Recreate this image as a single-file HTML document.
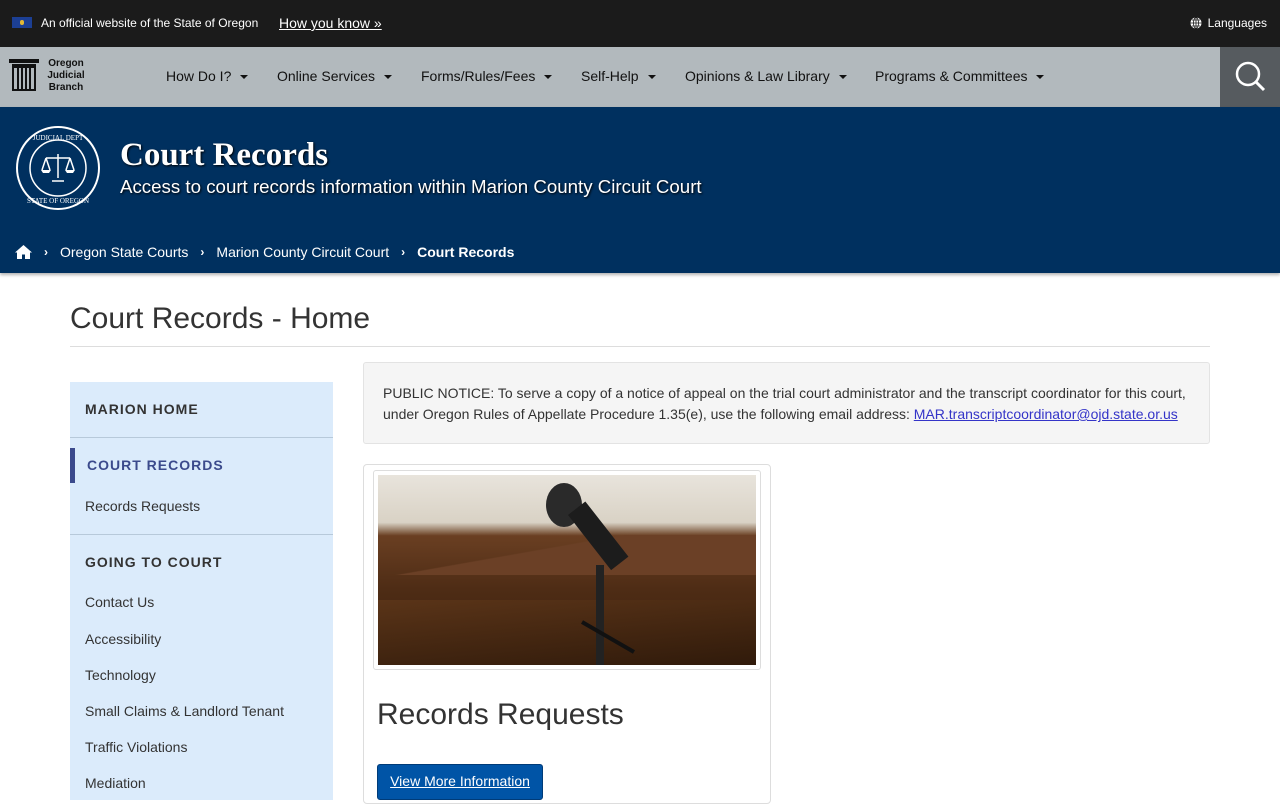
<!DOCTYPE html>
<html><head><meta charset="utf-8"><style>
*{box-sizing:border-box;margin:0;padding:0}
html,body{width:1280px;height:800px;overflow:hidden}
body{font-family:"Liberation Sans",Arial,sans-serif;background:#fff;color:#333}
.top{height:47px;background:#1b1b1b;color:#fff;position:relative;font-size:12px}
.top .flag{position:absolute;left:12px;top:17px;width:20px;height:11px;background:#1c3f94}
.top .flag:after{content:"";position:absolute;left:8px;top:3px;width:4px;height:5px;background:#e3b834;border-radius:2px}
.top .off{position:absolute;left:41px;top:16px}
.top .how{position:absolute;left:279px;top:15px;font-size:14px;text-decoration:underline}
.top .lang{position:absolute;right:13px;top:16px;display:flex;align-items:center;gap:6px}
.nav{height:60px;background:#b2b9bd;position:relative}
.logo{position:absolute;left:9px;top:11px}
.logo .t{position:absolute;left:32px;top:0;width:50px;text-align:center;font-size:10px;font-weight:bold;line-height:12px;color:#111}
.menu span{position:absolute;top:21px;font-size:14px;color:#111;white-space:nowrap}
.menu span:after{content:"";display:inline-block;margin-left:9px;vertical-align:middle;border-left:4px solid transparent;border-right:4px solid transparent;border-top:4px solid #111}
.srch{position:absolute;right:0;top:0;width:60px;height:60px;background:#565b5f}
.hero{height:166px;background:#00305f;position:relative;color:#fff;box-shadow:0 2px 3px rgba(0,0,0,.3)}
.seal{position:absolute;left:16px;top:19px}
.hero h1{position:absolute;left:120px;top:30px;font-family:"Liberation Serif",serif;font-size:33px;font-weight:bold;text-shadow:1px 1px 2px #000}
.hero .sub{position:absolute;left:120px;top:69px;font-size:18.7px;text-shadow:1px 1px 2px #000}
.crumb{position:absolute;left:15px;top:137px;font-size:14px;display:flex;align-items:center}
.crumb .sep{margin:0 12px;font-weight:bold;font-size:12px}
h2.pt{position:absolute;left:70px;top:302px;font-size:30px;font-weight:normal;color:#333}
.hr{position:absolute;left:70px;top:346px;width:1140px;height:1px;background:#ddd}
.side{position:absolute;left:70px;top:382px;width:263px;height:418px;background:#dbebfb}
.side .h{font-size:14px;font-weight:bold;letter-spacing:1px;color:#333;position:absolute;left:15px}
.side .l{font-size:14px;color:#333;position:absolute;left:15px}
.side .d{position:absolute;left:0;width:263px;height:1px;background:#b7c9da}
.notice{position:absolute;left:363px;top:362px;width:847px;height:82px;background:#f5f5f5;border:1px solid #e3e3e3;border-radius:3px;padding:20px 19px;font-size:14px;line-height:21px;color:#333}
.notice a{color:#3434c8}
.card{position:absolute;left:363px;top:464px;width:408px;height:340px;border:1px solid #ddd;border-radius:4px}
.img{position:absolute;left:9px;top:5px;width:388px;height:200px;border:1px solid #ddd;border-radius:3px;padding:4px}
.ph{width:100%;height:100%;position:relative;overflow:hidden;background:linear-gradient(180deg,#e8e4dc 0%,#d9d2c5 25%,#6a3f22 32%,#4e2c15 60%,#3a200e 100%)}
.card h3{position:absolute;left:13px;top:233px;font-size:30px;font-weight:normal;color:#333}
.btn{position:absolute;left:13px;top:299px;width:166px;height:36px;background:#0054a6;border:1px solid #003b78;border-radius:3px;color:#fff;font-size:14px;text-decoration:underline;text-align:center;line-height:33px}
</style></head><body>
<div class="top"><div class="flag"></div><div class="off">An official website of the State of Oregon</div><div class="how">How you know »</div>
<div class="lang"><svg width="12" height="12" viewBox="0 0 12 12"><circle cx="6" cy="6" r="5.5" fill="#fff"/><path d="M0.5 6h11M6 .5v11M2 3h8M2 9h8" stroke="#1b1b1b" stroke-width=".8"/><ellipse cx="6" cy="6" rx="2.5" ry="5.5" fill="none" stroke="#1b1b1b" stroke-width=".8"/></svg>Languages</div></div>
<div class="nav">
<div class="logo"><svg width="30" height="34" viewBox="0 0 30 34"><rect x="0" y="1" width="30" height="4" fill="#111"/><rect x="3" y="6" width="24" height="2" fill="#111"/><rect x="4" y="9" width="22" height="23" fill="none" stroke="#111" stroke-width="2"/><path d="M9 9v23M13 9v23M17 9v23M21 9v23" stroke="#111" stroke-width="2"/></svg><div class="t">Oregon<br>Judicial<br>Branch</div></div>
<div class="menu"><span style="left:166px">How Do I?</span><span style="left:277px">Online Services</span><span style="left:421px">Forms/Rules/Fees</span><span style="left:581px">Self-Help</span><span style="left:685px">Opinions &amp; Law Library</span><span style="left:875px">Programs &amp; Committees</span></div>
<div class="srch"><svg width="60" height="60" viewBox="0 0 60 60"><circle cx="28" cy="27" r="11" fill="none" stroke="#fff" stroke-width="2.5"/><path d="M36 35l8 8" stroke="#fff" stroke-width="3"/></svg></div>
</div>
<div class="hero">
<div class="seal"><svg width="84" height="84" viewBox="0 0 84 84"><circle cx="42" cy="42" r="41" fill="#00305f" stroke="#fff" stroke-width="2"/><circle cx="42" cy="42" r="28" fill="none" stroke="#fff" stroke-width="1.5"/><text x="42" y="14" font-size="7" fill="#fff" text-anchor="middle" font-family="Liberation Serif">JUDICIAL DEPT</text><text x="42" y="77" font-size="7" fill="#fff" text-anchor="middle" font-family="Liberation Serif">STATE OF OREGON</text><path d="M42 28v24M30 32h24M30 32l-4 12M30 32l4 12M54 32l-4 12M54 32l4 12M36 55h12" stroke="#fff" stroke-width="1.5" fill="none"/><path d="M25 44h10l-2 3h-6zM49 44h10l-2 3h-6z" fill="#fff"/></svg></div>
<h1>Court Records</h1><div class="sub">Access to court records information within Marion County Circuit Court</div>
<div class="crumb"><svg width="17" height="14" viewBox="0 0 17 14"><path d="M8.5 0L0 7.5h2V14h5V9.5h3V14h5V7.5h2z" fill="#fff"/></svg><span class="sep">›</span>Oregon State Courts<span class="sep">›</span>Marion County Circuit Court<span class="sep">›</span><b>Court Records</b></div>
</div>
<h2 class="pt">Court Records - Home</h2><div class="hr"></div>
<div class="side">
<div class="h" style="top:19px">MARION HOME</div>
<div class="d" style="top:55px"></div>
<div style="position:absolute;left:0;top:66px;width:5px;height:35px;background:#3b4a8c"></div>
<div class="h" style="top:75px;left:17px;color:#3b4a8c">COURT RECORDS</div>
<div class="l" style="top:116px">Records Requests</div>
<div class="d" style="top:152px"></div>
<div class="h" style="top:172px">GOING TO COURT</div>
<div class="l" style="top:212px">Contact Us</div>
<div class="l" style="top:249px">Accessibility</div>
<div class="l" style="top:285px">Technology</div>
<div class="l" style="top:321px">Small Claims &amp; Landlord Tenant</div>
<div class="l" style="top:357px">Traffic Violations</div>
<div class="l" style="top:393px">Mediation</div>
</div>
<div class="notice">PUBLIC NOTICE: To serve a copy of a notice of appeal on the trial court administrator and the transcript coordinator for this court, under Oregon Rules of Appellate Procedure 1.35(e), use the following email address: <a href="#">MAR.transcriptcoordinator@ojd.state.or.us</a></div>
<div class="card"><div class="img"><div class="ph">
<div style="position:absolute;left:0;top:60px;width:380px;height:40px;background:linear-gradient(170deg,transparent 40%,#6b4026 41%)"></div>
<div style="position:absolute;left:0;top:125px;width:380px;height:70px;background:linear-gradient(175deg,#5a3418,#2e190a)"></div>
<div style="position:absolute;left:168px;top:8px;width:36px;height:44px;border-radius:50%;background:#2a2a2a"></div>
<div style="position:absolute;left:190px;top:40px;width:22px;height:70px;background:#1c1c1c;transform:rotate(-38deg);transform-origin:top left"></div>
<div style="position:absolute;left:218px;top:90px;width:8px;height:110px;background:#222"></div>
<div style="position:absolute;left:200px;top:160px;width:60px;height:4px;background:#111;transform:rotate(30deg)"></div>
</div></div>
<h3>Records Requests</h3><div class="btn">View More Information</div></div>
</body></html>
